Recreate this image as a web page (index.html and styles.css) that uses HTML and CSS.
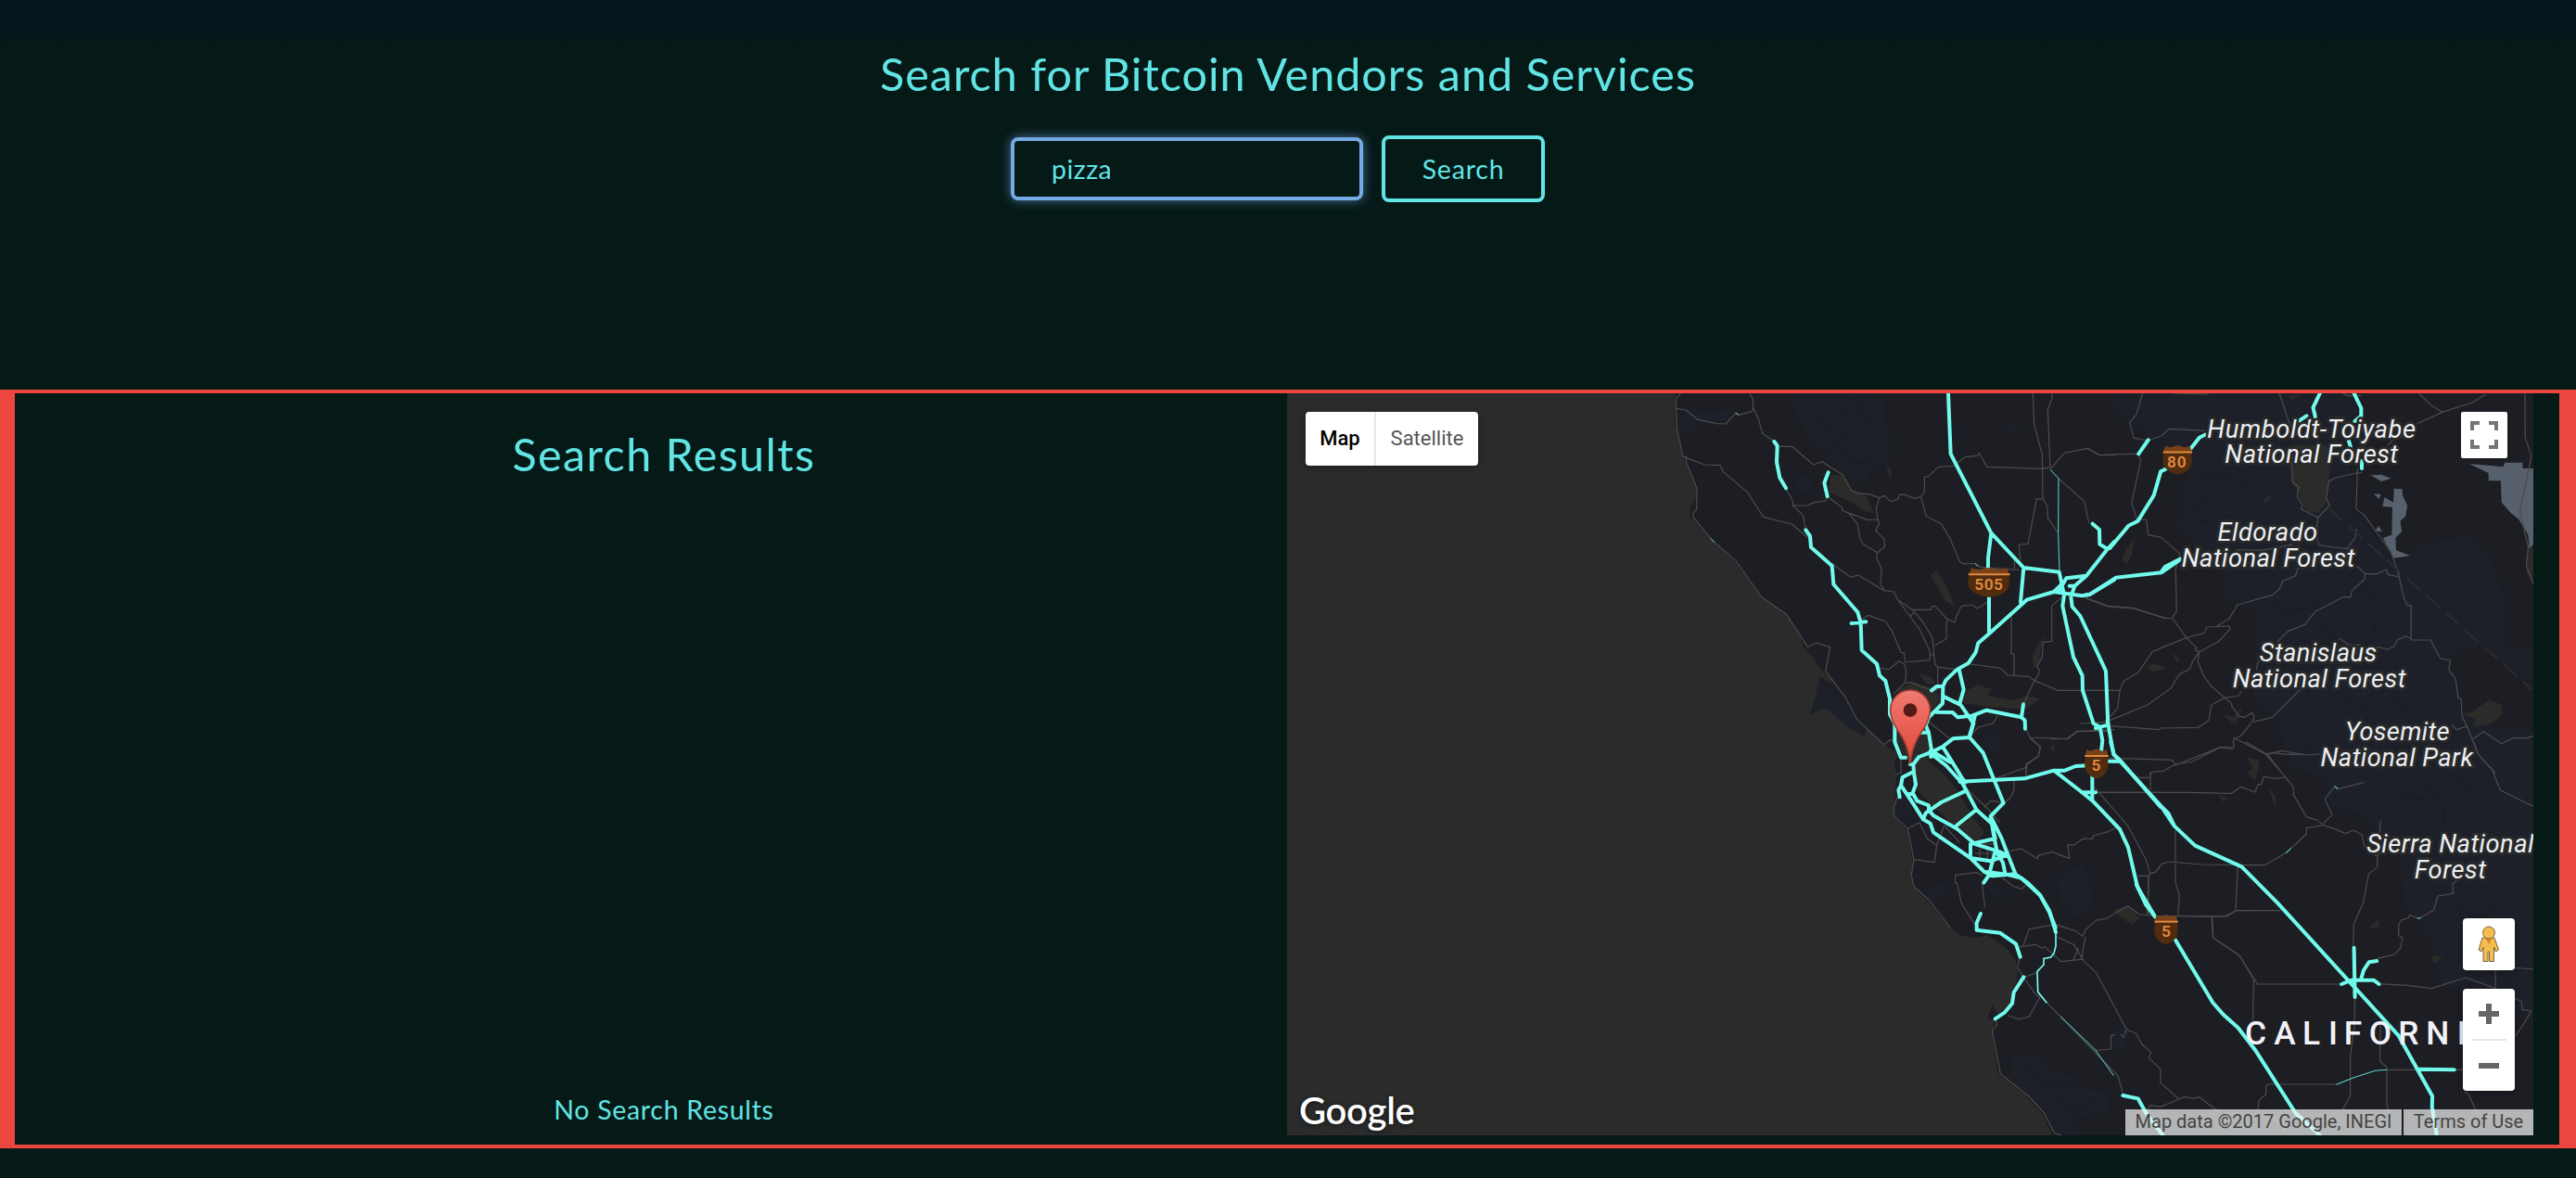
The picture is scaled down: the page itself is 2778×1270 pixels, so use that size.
FILE: index.html
```html
<!DOCTYPE html>
<html lang="en">
<head>
<meta charset="utf-8">
<title>Bitcoin Vendors and Services</title>
<link rel="stylesheet" href="styles.css">
</head>
<body>
<header class="search">
  <h1 class="heading">Search for Bitcoin Vendors and Services</h1>
  <form class="search-form">
    <input class="search-input" type="text" value="pizza" aria-label="Search term">
    <button class="search-button" type="button">Search</button>
  </form>
</header>
<main class="content">
  <section class="results">
    <h2 class="heading results-heading">Search Results</h2>
    <p class="results-empty">No Search Results</p>
  </section>
  <section class="map">
    <svg class="map-canvas" viewBox="-1176 42 4032 2400" preserveAspectRatio="none">
      <defs>
        <linearGradient id="pin" x1="0" y1="0" x2="0" y2="1">
          <stop offset="0" stop-color="#f07a70"/><stop offset="1" stop-color="#e2463a"/>
        </linearGradient>
        <g id="shield">
          <path fill="#512c0e" d="M2 22C-2 45 -2 62 8 76Q20 90 38 95Q56 90 68 76Q78 62 74 22Z"/>
          <path fill="#7a4118" d="M6 0Q14 6 24 4L38 -2L52 4Q62 6 70 0L75 20H1Z"/>
          <path fill="#e08b40" d="M0 18H76V24H0Z"/>
        </g>
      </defs>
      <path class="land" d="M80 42L78 130L103 247L148 348L148 380L126 415L128 440L200 520L270 585L320 650L360 705L440 757L485 830L495 865L535 905L550 950L548 1010L518 1080L565 1060L640 1120L690 1152L700 1125L760 1180L805 1212L788 1235L795 1270L793 1340L785 1380L785 1410L830 1455L848 1550L844 1600L850 1640L900 1690L950 1750L1000 1795L1050 1802L1090 1795L1150 1835L1180 1875L1188 1920L1178 1970L1165 2015L1125 2050L1106 2020L1088 2065L1112 2068L1105 2120L1125 2245L1210 2310L1265 2370L1300 2442H2860V42Z"/>
      <g class="park">
        <path d="M455 42H752V150L772 155V255L715 300L690 330L650 325L630 300L600 270L575 230L515 210L495 140L455 75ZM95 130L120 90L170 100L250 95V130L150 135L145 165L100 165ZM462 320L495 300L520 325L530 372L470 350ZM1140 155L1170 140L1200 160L1190 172ZM1005 145H1025V190L1005 182Z"/>
        <path d="M548 960L590 1020L630 1040L685 1125L690 1152L640 1120L565 1060L518 1080ZM1080 1130L1110 1150L1145 1180L1115 1205L1085 1180ZM785 1370L830 1340L850 1400L820 1430L790 1410Z"/>
        <path d="M1315 1610L1400 1560L1430 1650L1420 1710L1370 1735L1330 1690ZM890 1650L950 1620L965 1650L910 1690ZM1080 1640L1110 1620L1155 1660L1130 1690ZM1170 2185L1240 2180L1300 2240L1365 2250V2290L1475 2300V2370L1370 2380V2440H1310L1270 2360L1210 2300L1170 2260ZM1495 2080L1550 2110L1530 2170L1500 2160Z"/>
        <path d="M1490 42H2290V300L2260 410L2420 590L2460 530L2640 500L2720 570L2760 700V870H2856V2100L2700 1960H2560L2520 1800L2440 1700L2420 1520L2290 1400L2200 1380L2180 1290L2070 1250L2040 1130L1950 1030L1960 740L1860 710L1850 620L1700 470L1740 300L1640 200L1500 100Z"/>
      </g>
      <path class="land" d="M2260 300L2290 42H2856V520L2690 500L2480 530L2420 590ZM2590 880L2700 860L2856 1010V1130H2750L2620 1070Z"/>
      <g class="texture">
        <path d="M540 130l30 20l-25 25M600 90l40 30l50-20M620 160l30 40l60-10M580 200l50 30l40 40M640 250l50 20l30-40M690 110l40 40M650 60l40 20M1670 380l60 50l70-40M1750 330l80-30l60 20M1900 350l40-40M1770 460l100-20M2000 720l70 30l100-30M2150 790l60 40l-20 40M2290 650l60 80l-10 100M2300 900l50 90l-50 70M2250 1020l60 50l20 110M2400 1000l40 80M2100 1150l60 70M2350 1270l70 70l110 20M2500 1300l70 90l-10 70M2610 1280l40 60M2600 1700l80 40l90-60M2650 1790l60 90M1190 2200l50 30l40 50M1250 2260l60 30l50-20M1310 2320l70 40l60-30"/>
      </g>
      <g class="water">
        <path transform="translate(210 870)" d="M640 108L690 120L735 160L725 190L690 215L688 260L700 320L690 360L735 400L780 450L830 540L870 590L850 620L800 600L740 540L690 495L650 450L645 380L600 345L580 290L575 220L590 130ZM820 130L850 115L895 130L880 150L960 165L1010 150L1050 160L1000 195L880 185L770 170ZM660 80L700 90L710 115L680 110Z"/>
        <path d="M583 305L620 308L650 350L700 375L722 430L690 422L645 392L578 362ZM905 630L925 615L960 670L985 735L965 720L955 715ZM1235 890L1275 820L1255 910L1240 935ZM540 920L600 985L570 975L540 950ZM763 280L778 285V328ZM1290 1185L1310 1180L1305 1205Z"/>
        <path transform="translate(1410 0) scale(1.0102 1)" d="M660 210H770L778 300L770 395L740 428L705 425L680 370L656 320ZM130 540L155 510L145 565L130 595L113 580ZM193 928L215 915L258 930L215 943ZM437 1080L470 1090L500 1055L480 1110L465 1100L488 1130ZM1205 1080L1240 1070L1290 1032L1330 1050L1333 1080L1300 1110L1240 1120L1245 1095ZM565 390L585 372L590 380L575 398ZM645 52L690 42L660 64ZM1415 545L1432 540V655L1410 620ZM275 882L298 900L290 916Z"/>
        <path transform="translate(1410 1170) scale(1.0102 1)" d="M85 545L130 530L170 570L145 592ZM515 50L555 60L540 125L515 100L535 85ZM582 145L607 180L605 208ZM420 170L452 180L440 196ZM905 600L940 570L935 600ZM1105 690L1145 692L1112 716ZM670 734L735 723L680 730Z"/>
      </g>
      <g class="saltlake" transform="translate(1410 0) scale(1.0102 1)">
        <path d="M1226 270L1335 280L1340 266H1397V285H1432V530L1418 545L1415 500L1385 450L1360 430L1330 395L1327 325H1288V300Z"/>
        <path d="M985 350L1012 352V370L1028 405L1022 440L1005 455L1010 490L990 510L992 550L1037 567L985 575L950 510L978 500L980 410L948 408L955 378L983 395ZM910 307L945 305L976 317L945 327ZM920 367L943 369L937 384ZM926 487L936 470L947 490Z"/>
      </g>
      <g class="road">
        <path d="M97 42L83 60L82 90L86 160L105 247L116 248L114 262L150 350L149 418L136 430L140 445L200 518L275 583L360 702L440 757L508 862L537 849L581 863L566 940L630 1025L670 1100L755 1178L775 1163L800 1170M82 91L114 96L152 127L215 140L243 141L276 106L285 112L330 100L332 62L320 42M330 85L348 122L362 172L400 198M410 214H457L527 273L556 263L568 272L622 306L650 357L668 365L707 368L740 380L757 373L776 392L800 385L805 370L822 370L855 382L875 377L886 363V313L900 310L930 281L980 277L1018 248L1058 244L1063 235L1088 280L1268 286L1300 280L1338 235L1415 220L1452 242H1500M105 247L175 273L225 275L234 295L313 362L365 442L457 465L510 510M437 348L460 390V405H508L530 395L566 390L570 375M460 405L493 436L502 483M572 376L618 410L621 422L703 452L735 450L740 464L728 486L755 512L758 538L734 557L730 574L747 608L744 660L756 680L787 684L800 710L850 745L880 780L912 833L920 918L929 928M740 380L730 415L735 450M640 428L670 465L677 510L688 530L734 557M587 593L647 637L672 630L758 682M800 710L838 762L870 805L904 877V905M850 742H907L912 730L922 731L958 771L984 784L990 762L1006 730L1041 726L1056 738L1095 715M838 765L852 752M962 775L957 785V836L920 857M904 888H920M680 775L705 760L760 780L782 812L810 880L820 882L824 912L904 905M740 930L770 936L804 908L820 917L827 940L824 977L785 1015M929 928L990 935M929 928V1000L912 1005L840 976L822 980M1035 918L1132 931L1156 954L1222 958L1242 971L1318 1003H1500M1167 750V884L1176 886V954M875 377L891 438L940 464L968 510L1000 586L1010 593H1050L1070 605L1192 613M1177 580V610M1237 42L1241 142L1267 240L1269 383L1284 408L1285 445L1317 492M1299 42V58L1285 95L1293 285M1269 383H1249L1221 530L1192 531L1197 595M1320 318L1403 391L1418 461M1338 695L1298 730V844L1270 847L1267 895L1250 925L1258 938L1255 953L1242 971L1206 1048M1400 700L1480 730L1560 736L1665 770M1212 1125L1228 1155L1349 1160L1380 1136L1500 1130M1228 1155L1262 1186L1255 1215L1216 1244L1214 1270M898 1103L970 1160M1030 1154L1060 1122L1108 1110L1122 1085"/>
        <path transform="translate(1410 0) scale(1.0102 1)" d="M180 42L160 110L138 137L152 187L197 195L240 180L266 157L380 163M0 220L43 242L166 237L174 260L145 397L162 450L192 450L198 500L240 508L300 562L286 610L289 748L275 768L320 833L353 865L348 873L362 878L340 910L330 935L298 950L270 997L195 1050L75 1100M275 768L255 770L152 738L70 732L0 706M618 42L655 155M655 230L660 330L680 345L675 375L692 405L688 417L742 444L779 404L768 382L777 325L800 315L866 300L882 298M868 285L864 415L890 437L930 492L975 555L998 620L1017 705L1028 728H1040V840H1102L1134 900L1166 906L1160 937L1182 964L1191 1028L1200 1030L1203 1085L1225 1135L1255 1210L1310 1270M742 444L735 500L745 533L790 540L835 545L860 510L865 480M660 530L610 542L560 550L480 548M680 600L670 632L628 650L618 675L597 694L484 726L458 770L415 797L385 798L378 817L320 833L212 877L165 946L120 973L107 1003L100 1060L75 1090M415 797L458 795L460 805L422 846L362 878L357 910L375 955L400 990L465 1045L466 1055L490 1087L508 1090L530 1075L537 1085L535 1098L500 1145L470 1165M866 600L893 625L890 645L850 680L845 703L825 700L733 748L700 790L645 812L612 845M893 625L930 626L962 612L965 628L998 635M0 1003H108M810 835L840 855L880 856M930 862L965 870L985 860L995 840L1022 828L1040 835M685 1000L595 1090L535 1105M545 935L550 910L600 885M497 1005L487 1020L440 1028L400 1050L392 1100L358 1123L238 1125L234 1130L75 1118M1065 42L1103 80L1140 103L1060 140M1140 103L1235 72L1280 45M820 42L840 50L880 49M1405 42V185L1425 245L1388 425L1415 540L1409 600L1432 660M1170 1115L1185 1130L1222 1118M1237 1160L1272 1136L1330 1175L1365 1157H1412L1432 1150M470 1165L472 1188L428 1187L285 1245L275 1228L72 1222M470 1155L575 1210L620 1262M575 1210L625 1198L700 1212L800 1205M280 42L390 45M965 210L985 190L1020 180"/>
        <path transform="translate(210 870)" d="M600 345V400L583 405M590 475L577 510V538L622 580L642 680L634 730L642 768L690 810L760 900M642 680L709 689L716 632L740 570M660 560L685 612L716 635M622 580L660 560M740 570L790 625M790 430L875 510L920 560M870 510L890 490L930 495M967 425L965 460L950 485L930 498M900 420L1010 380M1005 415V372L1045 345L1050 315L1015 285M1085 290L1138 289L1170 265H1270M862 755L872 835M862 730L845 722L776 730L775 755L782 757L795 820L845 900M930 740L960 765L990 775L1005 762M940 655L990 645L1042 677L1043 668L1088 655L1145 677L1140 632L1160 633L1190 612L1220 613L1222 603L1270 590L1298 575M1225 445L1335 572L1393 680L1405 725L1425 720L1440 700M1370 733H1400V855M835 630H900M855 645V680M880 640V690M840 660H930M1230 463H1440M1180 240L1270 235"/>
        <path transform="translate(510 1590)" d="M695 240L715 185L800 170L862 190L888 208L897 187L930 157L966 150L1034 110L1072 138L1125 142L1355 144L1383 125H1440M680 243L735 235L757 247L765 242L818 290L885 283L890 245L897 210M805 210L860 236L893 290L932 326L1030 510L1060 522L1080 558L1109 583L1102 602L1140 638V682L1200 735L1140 760L1107 755L1095 775M858 285L875 245M685 275L677 308L697 342L735 395L750 405M697 342L740 325M750 405L715 468L682 476L645 465M750 400L1002 660L1020 722M930 577L980 573V530L992 527M1010 525L1020 535L1030 510M607 478L610 495L595 515L622 653L715 727L763 780L797 845L820 852M1305 148L1310 213L1395 270L1440 345M1200 735L1220 727L1245 733L1265 728L1330 778"/>
        <path transform="translate(1410 1170) scale(1.0102 1)" d="M40 163H330L465 166L495 145L540 162L550 137H560L568 112L605 118L637 114L663 146V170L705 242L740 253L757 268L800 283L830 296L855 285L882 300L892 340L932 370V403L904 427L887 518L856 590L855 665M510 0L580 40L637 114M757 265L787 235L764 185L795 143L805 152L890 130M755 270L705 278V297L640 358L572 398H505L370 396L265 387L240 395L222 420L205 425L200 433H165M285 285V455L298 495L293 560M485 402L478 545L445 563L403 565L293 562M478 545H625M403 568L406 633L490 690L548 783H820M536 768L533 900M160 115H205L207 98L247 93L285 72L340 63L428 17L470 22M575 40L600 35L640 40L700 40M205 98V155M200 433L195 560M935 370L942 255M930 700L985 688L1005 668L1013 635L1000 625V590L1010 575L1030 570L1035 560L1065 571L1113 543L1125 498L1175 490L1172 460L1210 430M935 782L1030 787L1105 797L1215 762L1310 797L1375 830L1395 840V865L1425 870L1395 920L1375 950M1310 797V740L1330 726L1432 735M860 825L858 920L845 1020V1145L820 1190M942 900L940 1032L962 1052V1175L970 1195M575 1112L585 1107H800M960 1060H1210M575 1112V1140L552 1160L550 1190M1240 0L1255 40L1300 90L1325 155L1385 185L1430 208M1210 1130L1225 1140L1250 1200M600 1215L640 1260"/>
      </g>
      <path class="border" d="M2195 415L2850 1000"/>
      <g class="ferry">
        <path d="M1293 288L1320 318L1319 500L1323 618M195 512L206 524M275 105L285 112M1050 593L1060 602"/>
        <path transform="translate(510 1590)" d="M817 468L930 577L988 659"/>
        <path class="ferry-wide" transform="translate(510 1590)" d="M801 190V240L795 263L785 276L762 280V300L741 322L743 388L772 424"/>
        <path transform="translate(1410 1170) scale(1.0102 1)" d="M800 1108L860 1084L925 1063L962 1060M638 360L655 344M795 143L805 152M1060 570H1070"/>
      </g>
      <g class="freeway">
        <path d="M963 42L971 238L1102 494L1207 606L1322 620L1338 695L1333 730L1368 895L1397 955L1398 1003L1433 1110L1454 1122L1462 1165L1458 1200M1102 494L1092 575V610M1095 700V820M1207 606L1197 718M400 198L410 212L408 265L418 315L438 349M575 298L562 332L572 375M502 484L516 504L519 540L587 600L592 660L670 750L680 785L683 873L732 917L741 955L760 972L774 1030V1080L790 1110V1170L810 1220H825M650 786L697 781M1430 464L1452 483L1453 530L1478 546M1322 680L1345 640L1410 632L1478 546L1500 522M1410 632L1372 665H1355M1372 665L1360 700L1364 732L1390 762L1473 940L1480 1115L1440 1125M1095 820L1217 710L1305 684L1330 660M1305 684L1395 697L1420 693L1500 645M1095 820L1060 850L1052 880L1028 915L992 935L955 970L946 990L945 1045L900 1090L890 1115L900 1140L912 1215M946 990H925L909 1003M998 935L1013 1000L1000 1045L1045 1110L1030 1155M946 1022L1000 1048M925 1073L977 1074L994 1090L1040 1085L1087 1067L1200 1090L1211 1100L1212 1127M1200 1090L1206 1048M870 1139H895"/>
        <path transform="translate(210 870)" d="M630 372L640 372L658 348L700 332L735 315L768 289L822 285L840 212M822 285L866 335L932 497L890 540L900 600L912 660L945 662L970 725M890 540L925 610L945 662M640 372L642 400L648 437L638 465L652 490L690 505L690 520L705 538L780 580L840 630L920 655L940 665M640 396L605 414L600 440L640 500L672 550L695 563L705 592L825 675L890 685L945 665M600 440L592 455L596 478M622 468H638M672 550L680 530L730 495L810 458M697 335L710 348L745 375L800 435L845 520L895 565M697 348L695 330M735 315L760 355L800 420L810 430M710 335L760 365M845 518L780 570M790 428L1000 418L1095 392H1130L1165 378L1205 376M1095 392L1185 462L1220 490L1308 582L1335 640L1365 768L1422 865M1185 463H1230M1219 410V490M1270 362H1310M1268 230L1288 340L1310 360L1440 510M825 630L905 612L895 565M825 630V675L870 720L898 733L970 727L1010 755L1050 795L1080 850L1100 900M903 660L885 730L868 755M915 665L930 690L937 725"/>
        <path transform="translate(510 1590)" d="M578 0L640 8L690 20L750 75L780 125L801 195M558 135L545 165V188L620 197L672 233L686 275M697 340L665 390L660 425L635 455L605 475"/>
        <path transform="translate(1410 0) scale(1.0102 1)" d="M75 543L135 470L165 455L216 372L238 295L258 285M335 220L362 185L380 176M167 238L198 193M0 694L12 692L95 638L240 622L300 580M238 622L252 603L300 578M748 42L726 88L733 118M857 42L880 90V115L860 132M682 130L705 115M840 195L846 215M882 260V285"/>
        <path transform="translate(1410 1170) scale(1.0102 1)" d="M78 0L88 40L240 208L282 272L348 335L497 403L612 520L845 778L1000 950L1108 1145L1107 1180L1122 1272M240 208L262 230L282 272M160 460L190 525L220 565M285 640L405 843L440 883L485 923L540 995L670 1200L748 1272M117 1143L165 1153L195 1207L245 1272M857 665L860 825M817 783L850 770L920 770L937 783M880 765L888 738L905 712L930 708M1065 1058L1178 1060"/>
      </g>
      <g class="shields">
        <use href="#shield" transform="translate(1028 607) scale(1.77 1)"/>
        <use href="#shield" transform="translate(1658 212) scale(1.24 .98)"/>
        <use href="#shield" transform="translate(1405 1194)"/>
        <use href="#shield" transform="translate(1630 1730)"/>
        <text x="1094" y="678" textLength="92">505</text>
        <text x="1702" y="282" textLength="62">80</text>
        <text x="1441" y="1263">5</text>
        <text x="1668" y="1799">5</text>
      </g>
      <g class="label">
        <text x="2138" y="185" textLength="674">Humboldt-Toiyabe</text>
        <text x="2138" y="268" textLength="560">National Forest</text>
        <text x="1996" y="518" textLength="323">Eldorado</text>
        <text x="1998" y="602" textLength="560">National Forest</text>
        <text x="2160" y="908" textLength="379">Stanislaus</text>
        <text x="2163" y="992" textLength="560">National Forest</text>
        <text x="2416" y="1163" textLength="338">Yosemite</text>
        <text x="2414" y="1248" textLength="493">National Park</text>
        <text x="2587" y="1526" textLength="541">Sierra National</text>
        <text x="2587" y="1610" textLength="232">Forest</text>
      </g>
      <text class="state" y="2148" x="1923 2017 2109 2193 2243 2324 2419 2509 2609 2650">CALIFORNIA</text>
      <path fill="url(#pin)" stroke="#a63e35" stroke-width="5" d="M840 1240C836 1195 824 1165 800 1132C786 1111 776 1092 776 1066A64 64 0 0 1 904 1066C904 1092 894 1111 880 1132C856 1165 844 1195 840 1240Z"/>
      <circle cx="840" cy="1067" r="22" fill="#541a15"/>
    </svg>
    <div class="map-type"><span class="map-type-item is-active">Map</span><span class="map-type-item">Satellite</span></div>
    <div class="fullscreen">
      <svg width="30" height="30" viewBox="0 0 30 30" fill="none" stroke="#757575" stroke-width="4"><path d="M2 10V2H10M20 2H28V10M28 20V28H20M10 28H2V20"/></svg>
    </div>
    <div class="side-controls">
      <div class="pegman">
        <svg width="24" height="40" viewBox="0 0 24 40" stroke="#74664a" stroke-width="1" fill="#f5bd4c">
          <path d="M5 13H18L22.500 26L19.500 28L17.500 23V38.500H12.500V28H11V38.500H6V23L4 28L1 26Z"/>
          <path d="M8 13H16L12 20Z" fill="#d98637" stroke="none"/>
          <circle cx="12" cy="7.500" r="6.500"/>
        </svg>
      </div>
      <div class="zoom">
        <svg class="zoom-icon" viewBox="0 0 22 22"><path fill="#666" d="M8 0H14V8H22V14H14V22H8V14H0V8H8Z"/></svg>
        <span class="zoom-divider"></span>
        <svg class="zoom-icon" viewBox="0 0 22 22"><path fill="#666" d="M0 8H22V14H0Z"/></svg>
      </div>
    </div>
    <div class="logo">Google</div>
    <div class="attribution"><span class="attribution-data">Map data ©2017 Google, INEGI</span><span class="attribution-terms">Terms of Use</span></div>
  </section>
</main>
</body>
</html>
```
FILE: styles.css
```css
* { box-sizing: border-box; }
body {
  margin: 0;
  height: 1270px;
  overflow: hidden;
  background: linear-gradient(#03161b 0, #03161b 30px, #051917 50px);
  color: #61e4e4;
  font-family: Lato, sans-serif;
}
.search {
  height: 420px;
  padding-top: 49px;
}
.heading {
  margin: 0;
  font-size: 48.5px;
  line-height: 60px;
  font-weight: 400;
  letter-spacing: 1px;
  text-align: center;
}
.results-heading { letter-spacing: 1.4px; }
.search-form {
  display: flex;
  justify-content: center;
  align-items: center;
  gap: 20px;
  margin-top: 37px;
  padding-right: 22px;
}
.search-input {
  width: 380px;
  height: 68px;
  padding: 0 40px;
  border: 4px solid #74aae6;
  border-radius: 8px;
  background: #051917;
  color: #61e4e4;
  font: 28.5px Lato, sans-serif;
  letter-spacing: .5px;
  box-shadow: 0 0 12px rgba(116, 170, 230, .6);
  outline: 0;
}
.search-button {
  width: 176px;
  height: 72px;
  padding: 0;
  border: 4px solid #61e4e4;
  border-radius: 8px;
  background: none;
  color: #61e4e4;
  font: 28.5px Lato, sans-serif;
  letter-spacing: .8px;
}
.content {
  display: flex;
  height: 818px;
  padding: 0 28px;
  border: solid #ec463f;
  border-width: 4px 18px 4px 16px;
}
.results {
  display: flex;
  flex-direction: column;
  width: 1344px;
  padding: 35px 0 20px;
  text-align: center;
}
.results-empty {
  margin: auto 0 0;
  font-size: 28.5px;
  line-height: 36px;
  letter-spacing: .7px;
}
.map {
  position: relative;
  width: 1344px;
  height: 800px;
  overflow: hidden;
  background: #2b2b2b;
  font-family: Roboto, sans-serif;
}
.map-canvas { display: block; width: 1344px; height: 800px; }
.land { fill: #1d1e24; }
.park { fill: #1e2029; }
.texture { fill: none; stroke: #1c1e25; stroke-width: 8; }
.water { fill: #2b2b2a; }
.saltlake { fill: #57606d; }
.road { fill: none; stroke: #4c4c4c; stroke-width: 3.6; stroke-linejoin: round; }
.border { fill: none; stroke: #2d2d2c; stroke-width: 6; stroke-dasharray: 60 24; }
.ferry { fill: none; stroke: #62d6c9; stroke-width: 3; }
.ferry-wide { stroke: #71fbec; stroke-width: 5; }
.freeway { fill: none; stroke: #71fbec; stroke-width: 12; stroke-linejoin: round; stroke-linecap: round; }
.shields { fill: #e08b40; font-size: 52px; font-weight: 600; text-anchor: middle; }
.label {
  fill: #eceff5;
  stroke: #292a29;
  stroke-width: 16;
  stroke-linejoin: round;
  paint-order: stroke;
  font-size: 82px;
  font-style: italic;
  text-anchor: middle;
}
.state { fill: #f1f2f8; font-size: 106px; font-weight: 500; }
.map-type {
  position: absolute;
  left: 20px;
  top: 20px;
  display: flex;
  height: 58px;
  border-radius: 4px;
  background: #fff;
  box-shadow: 0 2px 8px rgba(0, 0, 0, .3);
  color: #565656;
  font-size: 22px;
  line-height: 57px;
}
.map-type-item { width: 110px; text-align: center; }
.is-active {
  width: 76px;
  border-right: 2px solid #e8e8e8;
  color: #000;
  font-weight: 500;
}
.fullscreen {
  position: absolute;
  right: 28px;
  top: 20px;
  display: grid;
  place-items: center;
  width: 50px;
  height: 50px;
  border-radius: 2px;
  background: #fff;
}
.side-controls {
  position: absolute;
  right: 20px;
  bottom: 48px;
  display: grid;
  gap: 20px;
}
.pegman, .zoom {
  display: grid;
  place-items: center;
  width: 56px;
  height: 56px;
  border-radius: 4px;
  background: #fff;
  box-shadow: 0 2px 8px rgba(0, 0, 0, .3);
}
.zoom { grid-template-rows: 54px 2px 54px; height: 110px; }
.zoom-icon { width: 22px; height: 22px; }
.zoom-divider { width: 38px; height: 2px; background: #e6e6e6; }
.logo {
  position: absolute;
  left: 13px;
  bottom: 3px;
  color: #fff;
  font: 600 40px/48px Lato, sans-serif;
  letter-spacing: -.3px;
  text-shadow: 0 1px 5px rgba(0, 0, 0, .6);
}
.attribution {
  position: absolute;
  right: 0;
  bottom: 0;
  display: flex;
  gap: 2px;
  color: #444;
  font-size: 20px;
  line-height: 26px;
  white-space: nowrap;
}
.attribution-data, .attribution-terms {
  height: 28px;
  background: rgba(245, 245, 245, .7);
  text-align: center;
}
.attribution-data { width: 298px; }
.attribution-terms { width: 140px; }
```
